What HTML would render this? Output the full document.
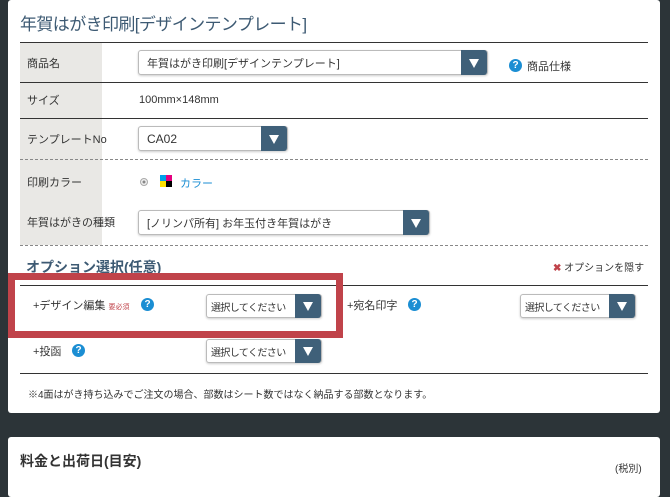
<!DOCTYPE html>
<html><head><meta charset="utf-8"><style>
*{margin:0;padding:0;box-sizing:border-box}
body{width:670px;height:482px;background:#2c3438;font-family:"Liberation Sans","Noto Sans CJK JP",sans-serif;position:relative;overflow:hidden;color:#333}
.p{position:absolute;background:#fff;left:8px;width:652px;border-radius:3px}
.a{position:absolute}
.t{font-size:11px;white-space:nowrap}
.sel{position:absolute;border:1px solid #bbb;border-radius:3px;background:#fff;font-size:11px;padding-left:8px;display:flex;align-items:center;box-shadow:0 1px 2px rgba(0,0,0,.2);white-space:nowrap;overflow:visible}
.sel .ar{position:absolute;right:0;top:-1px;bottom:-1px;width:26px;background:#3f6079;border-radius:0 3px 3px 0}
.sel .ar:after{content:"";position:absolute;left:8px;top:50%;margin-top:-4px;border-left:5px solid transparent;border-right:5px solid transparent;border-top:9px solid #fff}
.q{position:absolute;width:13px;height:13px;border-radius:50%;background:#1b8ed3;color:#fff;font-size:10px;font-weight:bold;text-align:center;line-height:13px}
.lab{position:absolute;left:20px;width:82px;background:#e9e8e5}
.hl{position:absolute;left:20px;width:628px;height:1px;background:#333}
.dl{position:absolute;left:20px;width:628px;border-top:1px dashed #888}
.sm{font-size:10px;letter-spacing:-0.6px;padding-left:4px}
</style></head><body>
<div class="p" style="top:0;height:413px"></div>
<div class="a" style="left:20px;top:10px;font-size:17px;letter-spacing:-0.6px;color:#3d5a73">年賀はがき印刷[デザインテンプレート]</div>
<div class="lab" style="top:42px;height:203px"></div>
<div class="hl" style="top:42px"></div>
<div class="hl" style="top:82px"></div>
<div class="hl" style="top:118px"></div>
<div class="dl" style="top:159px"></div>
<div class="dl" style="top:245px"></div>
<div class="a t" style="left:27px;top:55px">商品名</div>
<div class="a t" style="left:27px;top:92px">サイズ</div>
<div class="a t" style="left:27px;top:131px">テンプレートNo</div>
<div class="a t" style="left:27px;top:174px">印刷カラー</div>
<div class="a t" style="left:27px;top:214px">年賀はがきの種類</div>
<div class="sel" style="left:138px;top:50px;width:350px;height:25px">年賀はがき印刷[デザインテンプレート]<span class="ar"></span></div>
<div class="q" style="left:509px;top:59px">?</div>
<div class="a t" style="left:527px;top:58px;font-size:11px">商品仕様</div>
<div class="a t" style="left:139px;top:94px;font-size:11px">100mm×148mm</div>
<div class="sel" style="left:138px;top:126px;width:150px;height:25px;font-size:12px">CA02<span class="ar"></span></div>
<div class="a" style="left:140px;top:178px;width:8px;height:8px;border-radius:50%;border:1px solid #aaa;background:radial-gradient(#888 30%,#eee 40%)"></div>
<div class="a" style="left:160px;top:175px;width:12px;height:12px;background:conic-gradient(#e4007f 0 25%,#000 25% 50%,#ffe100 50% 75%,#00a0e9 75%)"></div>
<div class="a t" style="left:180px;top:175px;font-size:11px;color:#1b8ed3">カラー</div>
<div class="sel" style="left:138px;top:210px;width:292px;height:25px">[ノリンパ所有] お年玉付き年賀はがき<span class="ar"></span></div>
<div class="a" style="left:26px;top:257px;font-size:14px;font-weight:bold;color:#3d5a73">オプション選択(任意)</div>
<div class="a t" style="left:553px;top:259px;font-size:10px"><span style="color:#c0434a;font-weight:bold">✖</span> オプションを隠す</div>
<div class="hl" style="top:285px"></div>
<div class="a" style="left:8px;top:273px;width:335px;height:65px;border:7px solid #c0434a"></div>
<div class="a t" style="left:33px;top:297px;font-size:11px">+デザイン編集 <span style="color:#c0434a;font-size:7px">要必須</span></div>
<div class="q" style="left:141px;top:298px">?</div>
<div class="sel sm" style="left:206px;top:294px;width:116px;height:24px">選択してください<span class="ar"></span></div>
<div class="a t" style="left:347px;top:297px;font-size:11px">+宛名印字</div>
<div class="q" style="left:408px;top:298px">?</div>
<div class="sel sm" style="left:520px;top:294px;width:116px;height:24px">選択してください<span class="ar"></span></div>
<div class="a t" style="left:33px;top:343px;font-size:11px">+投函</div>
<div class="q" style="left:72px;top:344px">?</div>
<div class="sel sm" style="left:206px;top:339px;width:116px;height:24px">選択してください<span class="ar"></span></div>
<div class="hl" style="top:373px"></div>
<div class="a t" style="left:28px;top:386px;font-size:10px">※4面はがき持ち込みでご注文の場合、部数はシート数ではなく納品する部数となります。</div>
<div class="p" style="top:437px;height:60px"></div>
<div class="a" style="left:20px;top:451px;font-size:14px;font-weight:bold;color:#333">料金と出荷日(目安)</div>
<div class="a t" style="left:615px;top:460px;font-size:10px">(税別)</div>
</body></html>
